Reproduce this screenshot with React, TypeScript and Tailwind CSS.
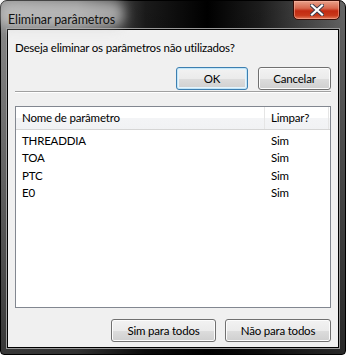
import React from 'react'

const font = { fontFamily: 'Lato, "Noto Sans", Arial, sans-serif' }

const rows = [
    { name: "THREADDIA", clean: "Sim" },
    { name: "TOA", clean: "Sim" },
    { name: "PTC", clean: "Sim" },
    { name: "E0", clean: "Sim" },
]

function WinButton({ label, width, primary }: { label: string, width: string, primary?: boolean }) {
    return (
        <button
            className={
                width + " h-[23px] rounded-[3px] border text-[11.5px] tracking-[-0.2px] text-black leading-none " +
                (primary
                    ? "border-[#3c7fb1] bg-[linear-gradient(180deg,#f2f2f2_0%,#ebebeb_50%,#dddddd_51%,#cfcfcf_100%)] shadow-[inset_0_0_0_1px_#c4e5f6,inset_0_0_0_2px_#e6f4fc]"
                    : "border-[#707070] bg-[linear-gradient(180deg,#f2f2f2_0%,#ebebeb_50%,#dddddd_51%,#cfcfcf_100%)] shadow-[inset_0_0_0_1px_#fcfcfc]")
            }
        >
            {label}
        </button>
    )
}

export default function App() {
    return (
        <div className="w-[346px] h-[355px] bg-white" style={font}>
            <div className="w-full h-full flex flex-col rounded-t-[7px] rounded-b-[4px] border border-black bg-[linear-gradient(180deg,rgba(0,0,0,0)_0%,rgba(0,0,0,0.6)_100%),linear-gradient(90deg,#8c8c8c_0%,#7a7a7a_22%,#1a1a1a_42%,#000_60%,#1c1c1c_75%,#444_88%,#666_100%)]">
                {/* title bar */}
                <div className="h-[28px] flex items-start justify-between pl-[7px] pr-[5px]">
                    <div className="relative mt-[5px]">
                        <span className="absolute -left-[10px] -top-[5px] w-[126px] h-[26px] rounded-[10px] bg-[#cfcfcf]/70 blur-[6px]"></span>
                        <span className="relative text-[12.5px] tracking-[-0.1px] text-[#111]">Eliminar parâmetros</span>
                    </div>
                    <button className="w-[47px] h-[20px] -mt-px rounded-b-[5px] border border-[#3a0d06] flex items-center justify-center bg-[linear-gradient(180deg,#e8a08a_0%,#d8684e_40%,#c22a12_55%,#c8381a_80%,#e07a5c_100%)] shadow-[inset_0_0_0_1px_rgba(255,190,170,0.5)]">
                        <svg width="14" height="12" viewBox="0 0 14 12">
                            <path d="M2 1.5 L12 10.5 M12 1.5 L2 10.5" stroke="#3a3a4a" strokeWidth="4" strokeLinecap="square" />
                            <path d="M2 1.5 L12 10.5 M12 1.5 L2 10.5" stroke="#fff" strokeWidth="2.2" strokeLinecap="square" />
                        </svg>
                    </button>
                </div>

                {/* client area */}
                <div className="mx-[6px] mb-[6px] flex-1 border border-black shadow-[0_0_0_1px_#9a9a9a]">
                    <div className="h-full bg-[#f0f0f0] flex flex-col px-[7px] text-[11.5px] tracking-[-0.2px] text-black">
                        <p className="pt-[10px] leading-[16px]">
                            Deseja eliminar os parâmetros não utilizados?
                        </p>
                        <div className="flex justify-end gap-[10px] mt-[11px]">
                            <WinButton label="OK" width="w-[72px]" primary />
                            <WinButton label="Cancelar" width="w-[73px]" />
                        </div>
                        <div className="mt-[1px] h-[2px] border-t border-[#a0a0a0] border-b border-b-white"></div>

                        {/* list */}
                        <div className="mt-[13px] h-[202px] border border-[#828790] bg-white">
                            <div className="flex h-[23px] border-b border-[#d5d5d5] bg-[linear-gradient(180deg,#ffffff_0%,#ffffff_50%,#f3f4f6_51%,#f1f2f4_100%)]">
                                <div className="w-[249px] pl-[6px] flex items-center border-r border-[#e5e5e5]">Nome de parâmetro</div>
                                <div className="flex-1 pl-[6px] flex items-center border-r border-[#e5e5e5] mr-px">Limpar?</div>
                            </div>
                            <div className="pt-[2px]">
                                {rows.map((r) => (
                                    <div key={r.name} className="flex h-[17.4px] items-center">
                                        <div className="w-[249px] pl-[6px]">{r.name}</div>
                                        <div className="flex-1 pl-[6px]">{r.clean}</div>
                                    </div>
                                ))}
                            </div>
                        </div>

                        <div className="flex justify-end gap-[9px] mt-[11px]">
                            <WinButton label="Sim para todos" width="w-[105px]" />
                            <WinButton label="Não para todos" width="w-[106px]" />
                        </div>
                    </div>
                </div>
            </div>
        </div>
    )
}
